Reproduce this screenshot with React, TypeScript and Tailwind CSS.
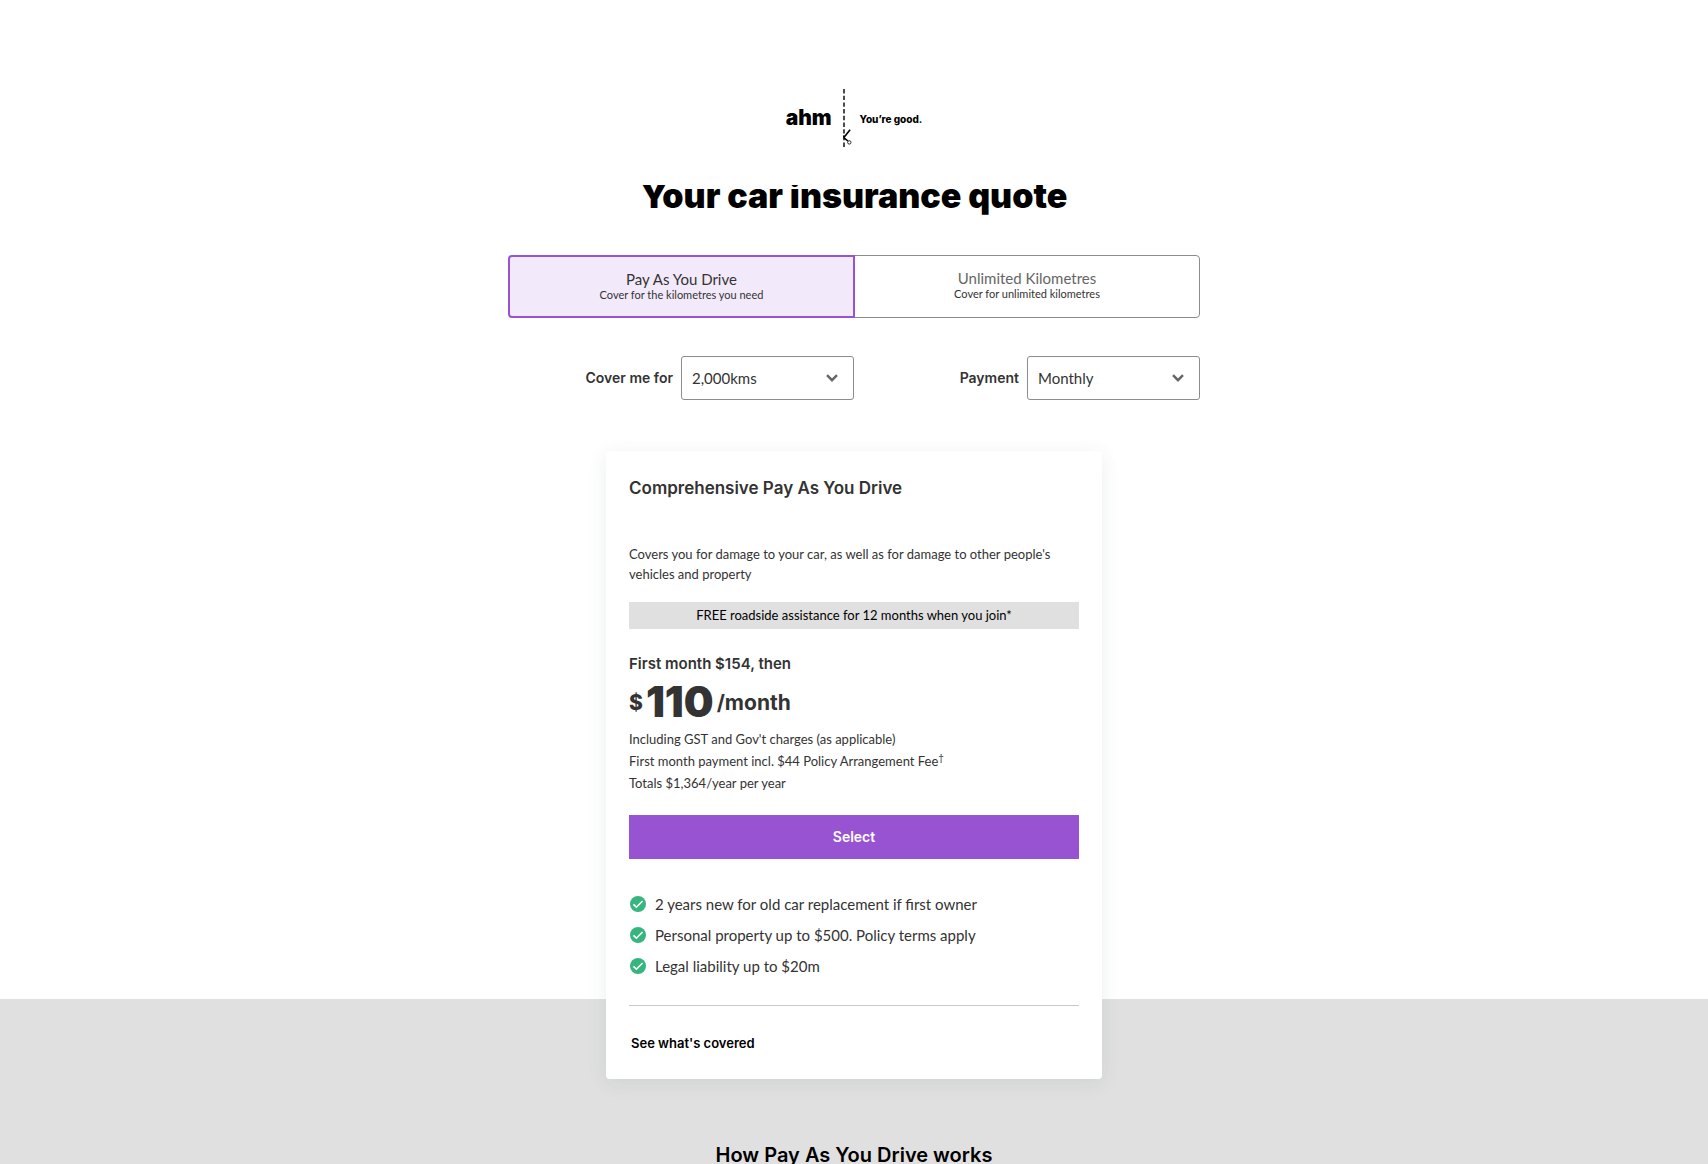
import { useState } from "react";

type Cover = "payd" | "unlimited";

const features = [
  "2 years new for old car replacement if first owner",
  "Personal property up to $500. Policy terms apply",
  "Legal liability up to $20m",
];

const Logo = () => (
  <a href="#" className="flex h-[58px] items-center text-black font-['Inter',sans-serif]">
    <span className="text-[21px] leading-6 font-black">ahm</span>
    <svg className="mx-2" width="12" height="58" viewBox="0 0 12 58" fill="none" aria-hidden="true">
      <path d="M4 0v58" stroke="#000" strokeWidth="1.4" strokeDasharray="4.4 2.3" />
      {/* scissors */}
      <path d="M10.1 40.8 4.3 48" stroke="#000" strokeWidth="1.6" />
      <path d="M3.7 46.4 4.3 49l3.6 3" stroke="#000" strokeWidth="1.6" />
      <circle cx="9.3" cy="53.4" r="1.7" stroke="#000" strokeWidth="0.8" />
    </svg>
    <span className="pt-0.5 text-[10px] leading-6 font-extrabold">You’re good.</span>
  </a>
);

const CheckIcon = () => (
  <svg className="shrink-0" width="16" height="16" viewBox="0 0 16 16" fill="none" aria-hidden="true">
    <circle cx="8" cy="8" r="8" fill="#37b57f" />
    <path d="m3.4 8.3 3 2.9 6.2-6.2" stroke="#fff" strokeWidth="1.6" />
  </svg>
);

interface SelectFieldProps {
  id: string;
  label: string;
  options: string[];
}

const SelectField = ({ id, label, options }: SelectFieldProps) => (
  <div className="grid grid-cols-2 items-center">
    <label
      htmlFor={id}
      className="pr-2 text-right text-sm font-semibold whitespace-nowrap font-['Inter',sans-serif]"
    >
      {label}
    </label>
    <div className="relative">
      <select
        id={id}
        className="block h-11 w-full appearance-none rounded-[3px] border border-[#8c8c8c] bg-white pr-9 pl-2.5 text-[15px]"
      >
        {options.map((option) => (
          <option key={option}>{option}</option>
        ))}
      </select>
      <svg
        className="pointer-events-none absolute top-[18px] right-4"
        width="12"
        height="8"
        viewBox="0 0 12 8"
        fill="none"
        aria-hidden="true"
      >
        <path d="m1 1.2 5 5 5-5" stroke="#666" strokeWidth="2.4" />
      </svg>
    </div>
  </div>
);

const QuoteCard = () => (
  <article className="relative z-10 mx-auto mt-[51px] w-full max-w-[496px] rounded bg-white px-[23px] pt-[25px] pb-[26px] shadow-[0_4px_20px_rgba(44,62,80,0.09)]">
    <h2 className="text-[17px] leading-6 font-semibold font-['Inter',sans-serif]">
      Comprehensive Pay As You Drive
    </h2>
    <p className="mt-11 text-[13px] leading-5">
      Covers you for damage to your car, as well as for damage to other people's vehicles and property
    </p>
    <p className="mt-[18px] bg-[#e0e0e0] text-center text-[13px] leading-[27px] text-black">
      FREE roadside assistance for 12 months when you join*
    </p>

    <p className="mt-[25px] text-[15px] leading-5 font-semibold font-['Inter',sans-serif]">
      First month $154, then
    </p>
    <p className="mt-1.5 flex h-11 items-center gap-[3px] font-['Inter',sans-serif]">
      <span className="text-[21px] leading-none font-extrabold">$</span>
      <span className="text-[42px] leading-none font-black">110</span>
      <span className="text-[21px] leading-none font-bold">/month</span>
    </p>
    <div className="mt-1 text-[13px] leading-[22px]">
      <p>Including GST and Gov't charges (as applicable)</p>
      <p>
        First month payment incl. $44 Policy Arrangement Fee<sup>†</sup>
      </p>
      <p>Totals $1,364/year per year</p>
    </div>

    <button
      type="button"
      className="mt-[21px] h-11 w-full cursor-pointer bg-[#9853d3] text-sm font-semibold text-white font-['Inter',sans-serif] hover:bg-[#8743c2]"
    >
      Select
    </button>

    <ul className="mt-[33px] flex flex-col gap-[7px] pl-px">
      {features.map((feature) => (
        <li key={feature} className="flex items-center gap-[9px] text-[15px] leading-6">
          <CheckIcon />
          {feature}
        </li>
      ))}
    </ul>

    <hr className="mt-[27px] border-[#c8c8c8]" />
    <button
      type="button"
      className="mt-[27px] ml-0.5 block cursor-pointer text-[13px] leading-5 font-semibold text-black font-['Inter',sans-serif]"
    >
      See what's covered
    </button>
  </article>
);

const App = () => {
  const [cover, setCover] = useState<Cover>("payd");

  const tabClass = (value: Cover) =>
    cover === value
      ? "relative z-10 border-2 border-[#9853d3] bg-[#f2eafa]"
      : "border border-[#8c8c8c] bg-white";
  const titleClass = (value: Cover) => (cover === value ? "text-[#333]" : "text-[#666]");

  return (
    <main className="flex min-h-screen flex-col bg-white text-[#333] font-['Lato','Inter',sans-serif]">
      <header className="flex justify-center pt-[89px]">
        <Logo />
      </header>

      <h1 className="mt-[38px] overflow-hidden pb-3 text-center text-[34px] leading-[22px] font-black text-black font-['Inter',sans-serif]">
        Your car insurance quote
      </h1>

      <div className="mx-auto mt-9 w-full max-w-[692px]">
        <div className="grid grid-cols-2">
          <button
            type="button"
            aria-pressed={cover === "payd"}
            onClick={() => setCover("payd")}
            className={`-mr-px flex cursor-pointer flex-col items-center rounded-l pt-[13px] pb-3.5 ${tabClass("payd")}`}
          >
            <span className={`text-[15px] leading-[18px] ${titleClass("payd")}`}>Pay As You Drive</span>
            <span className="text-[11px] leading-[14px]">Cover for the kilometres you need</span>
          </button>
          <button
            type="button"
            aria-pressed={cover === "unlimited"}
            onClick={() => setCover("unlimited")}
            className={`flex cursor-pointer flex-col items-center rounded-r pt-[13px] pb-3.5 ${tabClass("unlimited")}`}
          >
            <span className={`text-[15px] leading-[18px] ${titleClass("unlimited")}`}>Unlimited Kilometres</span>
            <span className="text-[11px] leading-[14px]">Cover for unlimited kilometres</span>
          </button>
        </div>

        <div className="mt-[38px] grid grid-cols-2">
          <SelectField id="kms" label="Cover me for" options={["2,000kms", "5,000kms", "10,000kms"]} />
          <SelectField id="payment" label="Payment" options={["Monthly", "Yearly"]} />
        </div>
      </div>

      <QuoteCard />

      <section className="-mt-20 grow bg-[#e0e0e0] pt-[142px]">
        <h2 className="text-center text-xl leading-7 font-semibold text-black font-['Inter',sans-serif]">
          How Pay As You Drive works
        </h2>
      </section>
    </main>
  );
};

export default App;
